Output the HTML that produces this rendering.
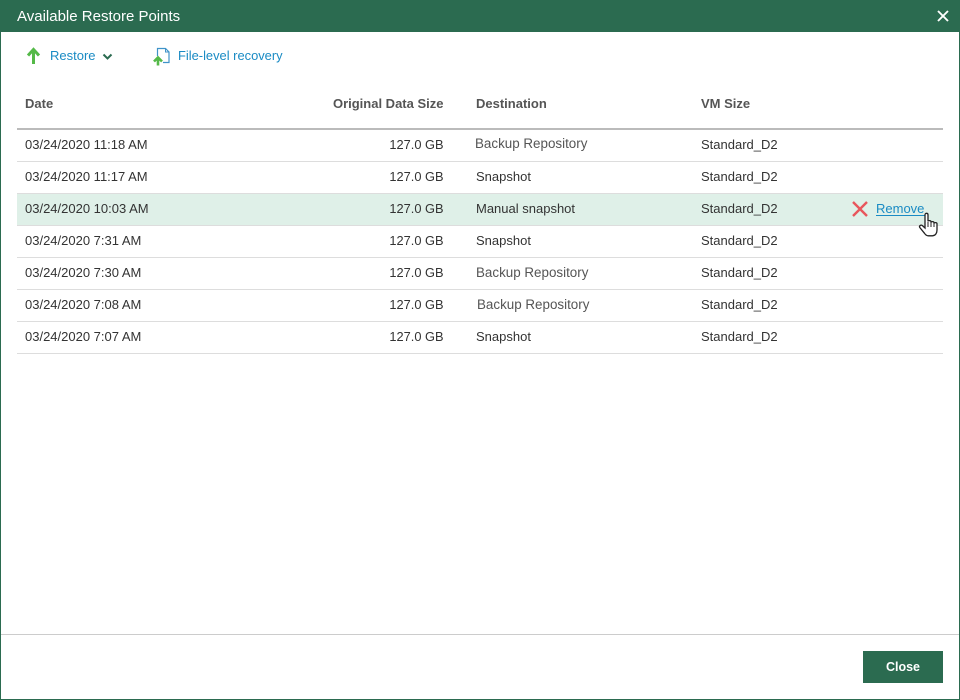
<!DOCTYPE html>
<html>
<head>
<meta charset="utf-8">
<style>
html,body{margin:0;padding:0;background:#fff}
body{width:960px;height:700px;position:relative;overflow:hidden;font-family:"Liberation Sans",Arial,sans-serif;font-size:13px;color:#333}
.t{position:absolute;white-space:nowrap;line-height:16px}
.h{font-weight:bold;color:#555;font-size:13px}
.line{position:absolute;left:17px;width:926px;height:1px;background:#ddd}
.r{text-align:right;width:150px;left:293.500px;font-size:12.800px}
.h.r{font-size:13px}
.g{color:#555;font-size:13.400px}
</style>
</head>
<body>
<div style="position:absolute;left:0;top:0;width:958px;height:699px;border:1px solid #2b6b50;border-top:none"></div>
<div style="position:absolute;left:0;top:0;width:960px;height:32px;background:#2b6b50"></div>
<div class="t" style="left:17px;top:9px;color:#fff;font-size:15px">Available Restore Points</div>
<svg style="position:absolute;left:937px;top:10px" width="12" height="12" viewBox="0 0 12 12"><path d="M1 1L11 11M11 1L1 11" stroke="#fff" stroke-width="1.900" fill="none"/></svg>

<svg style="position:absolute;left:27px;top:47px" width="15" height="18" viewBox="0 0 15 18"><path d="M6.500 17V2.500M1 8.500L6.500 2.500L12 8.500" stroke="#54b948" stroke-width="3" fill="none"/></svg>
<div class="t" style="left:50px;top:48px;color:#1a8bc4;font-size:13px">Restore</div>
<svg style="position:absolute;left:102px;top:52px" width="11" height="9" viewBox="0 0 11 9"><path d="M1.500 2.500L5.500 6.500L9.500 2.500" stroke="#2b6b50" stroke-width="2" fill="none"/></svg>

<svg style="position:absolute;left:153px;top:47px" width="17" height="19" viewBox="0 0 17 19"><path d="M4.500 9V1.500H12.500L16 5V15.500H10" stroke="#3f93c9" stroke-width="1.200" fill="none"/><path d="M12.500 1.500V5H16" stroke="#3f93c9" stroke-width="1" fill="none"/><path d="M5 18.500V11.500M1 14.500L5 10.500L9 14.500" stroke="#54b948" stroke-width="2.600" fill="none"/></svg>
<div class="t" style="left:178px;top:48px;color:#1a8bc4;font-size:12.900px">File-level recovery</div>

<div class="t h" style="left:25px;top:96px">Date</div>
<div class="t h r" style="top:96px">Original Data Size</div>
<div class="t h" style="left:476px;top:96px">Destination</div>
<div class="t h" style="left:701px;top:96px">VM Size</div>
<div style="position:absolute;left:17px;top:128px;width:926px;height:2px;background:#bbb"></div>

<div style="position:absolute;left:17px;top:194px;width:926px;height:31px;background:#dff0e8"></div>
<div class="line" style="top:161px"></div>
<div class="line" style="top:193px"></div>
<div class="line" style="top:225px"></div>
<div class="line" style="top:257px"></div>
<div class="line" style="top:289px"></div>
<div class="line" style="top:321px"></div>
<div class="line" style="top:353px"></div>

<div class="t" style="left:25px;top:137px">03/24/2020 11:18 AM</div><div class="t r" style="top:137px">127.0 GB</div><div class="t g" style="left:475px;top:136px">Backup Repository</div><div class="t" style="left:701px;top:137px">Standard_D2</div>
<div class="t" style="left:25px;top:169px">03/24/2020 11:17 AM</div><div class="t r" style="top:169px">127.0 GB</div><div class="t" style="left:476px;top:169px">Snapshot</div><div class="t" style="left:701px;top:169px">Standard_D2</div>
<div class="t" style="left:25px;top:201px">03/24/2020 10:03 AM</div><div class="t r" style="top:201px">127.0 GB</div><div class="t" style="left:476px;top:201px">Manual snapshot</div><div class="t" style="left:701px;top:201px">Standard_D2</div>
<div class="t" style="left:25px;top:233px">03/24/2020 7:31 AM</div><div class="t r" style="top:233px">127.0 GB</div><div class="t" style="left:476px;top:233px">Snapshot</div><div class="t" style="left:701px;top:233px">Standard_D2</div>
<div class="t" style="left:25px;top:265px">03/24/2020 7:30 AM</div><div class="t r" style="top:265px">127.0 GB</div><div class="t g" style="left:476px;top:265px">Backup Repository</div><div class="t" style="left:701px;top:265px">Standard_D2</div>
<div class="t" style="left:25px;top:297px">03/24/2020 7:08 AM</div><div class="t r" style="top:297px">127.0 GB</div><div class="t g" style="left:477px;top:297px">Backup Repository</div><div class="t" style="left:701px;top:297px">Standard_D2</div>
<div class="t" style="left:25px;top:329px">03/24/2020 7:07 AM</div><div class="t r" style="top:329px">127.0 GB</div><div class="t" style="left:476px;top:329px">Snapshot</div><div class="t" style="left:701px;top:329px">Standard_D2</div>

<svg style="position:absolute;left:851px;top:200px" width="18" height="18" viewBox="0 0 18 18"><path d="M2 2L16 16M16 2L2 16" stroke="#e8565c" stroke-width="2.400" fill="none"/></svg>
<div class="t" style="left:876px;top:201px;color:#1a8bc4;font-size:13px;border-bottom:1px solid #1a8bc4;height:14px;width:49px">Remove</div>
<svg style="position:absolute;left:918px;top:212px" width="21" height="25" viewBox="0 0 21 25"><path d="M7 14V2.800C7 .8 10 .8 10 2.800V9.500C10 8.300 13 8.300 13 9.800V10.500C13 9.300 16 9.300 16 10.800V11.500C16 10.300 19 10.300 19 11.800V18C19 21 17.500 23.800 14.500 23.800H10.500C8.500 23.800 7.500 22.800 6.500 21.300L1.800 15.500C.8 14 2.800 12.500 4.300 13.500L7 16Z" fill="#fff" stroke="#222" stroke-width="1.300"/><path d="M10 10V15M13 10.500V15M16 11.500V15" stroke="#222" stroke-width="1" fill="none"/></svg>

<div style="position:absolute;left:1px;top:634px;width:958px;height:1px;background:#ccc"></div>
<div style="position:absolute;left:863px;top:651px;width:80px;height:32px;background:#2b6b50;color:#fff;text-align:center;line-height:33px;font-weight:bold;font-size:12.500px">Close</div>
</body>
</html>
